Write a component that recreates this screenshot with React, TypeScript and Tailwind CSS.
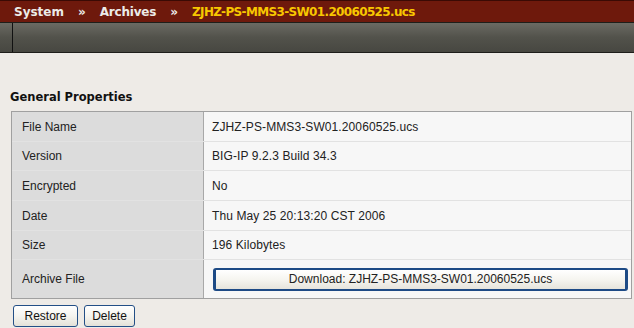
import React from "react";

const rows: [string, string][] = [
  ["File Name", "ZJHZ-PS-MMS3-SW01.20060525.ucs"],
  ["Version", "BIG-IP 9.2.3 Build 34.3"],
  ["Encrypted", "No"],
  ["Date", "Thu May 25 20:13:20 CST 2006"],
  ["Size", "196 Kilobytes"],
];

export default function App() {
  return (
    <div className="w-[634px] h-[328px] bg-[#eeebe7] overflow-hidden" style={{ fontFamily: '"Liberation Sans", Arial, sans-serif' }}>
      <div className="h-[22px] bg-[#6e190c] border-t border-[#3a0a04] flex items-center pl-[14px] gap-[14px] text-[12px] font-bold" style={{ fontFamily: '"DejaVu Sans", Verdana, sans-serif' }}>
        <span className="text-[#ecebe8]">System</span>
        <span className="text-[#ecebe8]">»</span>
        <span className="text-[#ecebe8] tracking-[-0.2px]">Archives</span>
        <span className="text-[#ecebe8]">»</span>
        <span className="text-[#f8c700] tracking-[-0.65px]">ZJHZ-PS-MMS3-SW01.20060525.ucs</span>
      </div>
      <div className="h-[31px] border-y border-[#1e1e1a] bg-gradient-to-b from-[#6b6a63] via-[#52524b] to-[#474741] flex">
        <div className="w-[13px] border-r border-[#111]" />
      </div>
      <div className="h-[58px] flex items-end pl-[10px] pb-[5px]">
        <span className="text-[11.5px] font-bold text-[#111]" style={{ fontFamily: '"DejaVu Sans", Verdana, sans-serif' }}>General Properties</span>
      </div>
      <div className="ml-[11px] w-[621px] border border-[#a0a0a0] text-[12px] text-[#222]">
        {rows.map(([k, v], i) => (
          <div key={k} className={`flex ${i === 0 || i === 2 || i === 3 ? "h-[30px]" : "h-[29px]"} border-b border-[#e2e2e2]`}>
            <div className="w-[192px] bg-[#dcdcdc] border-r border-[#a8a8a8] flex items-center pl-[10px]">{k}</div>
            <div className="flex-1 bg-[#f7f7f7] flex items-center pl-[8px] tracking-[0.1px]">{v}</div>
          </div>
        ))}
        <div className="flex h-[38px]">
          <div className="w-[192px] bg-[#dcdcdc] border-r border-[#a8a8a8] flex items-center pl-[10px]">Archive File</div>
          <div className="flex-1 bg-[#f7f7f7] flex items-center pl-[9px]">
            <button className="w-[415px] h-[23px] rounded-[3px] border-2 border-x-[3px] border-[#1d4a85] bg-gradient-to-b from-[#ffffff] via-[#f6f5f0] to-[#e6e4dc] text-[12px] text-[#222] flex items-center justify-center">
              Download: ZJHZ-PS-MMS3-SW01.20060525.ucs
            </button>
          </div>
        </div>
      </div>
      <div className="flex gap-[6px] ml-[13px] mt-[6px]">
        <button className="w-[65px] h-[22px] rounded-[3px] border border-[#234f86] bg-gradient-to-b from-[#ffffff] via-[#f5f4ef] to-[#e3e1d8] text-[12px] text-[#111] flex items-center justify-center">Restore</button>
        <button className="w-[51px] h-[22px] rounded-[3px] border border-[#234f86] bg-gradient-to-b from-[#ffffff] via-[#f5f4ef] to-[#e3e1d8] text-[12px] text-[#111] flex items-center justify-center">Delete</button>
      </div>
    </div>
  );
}
